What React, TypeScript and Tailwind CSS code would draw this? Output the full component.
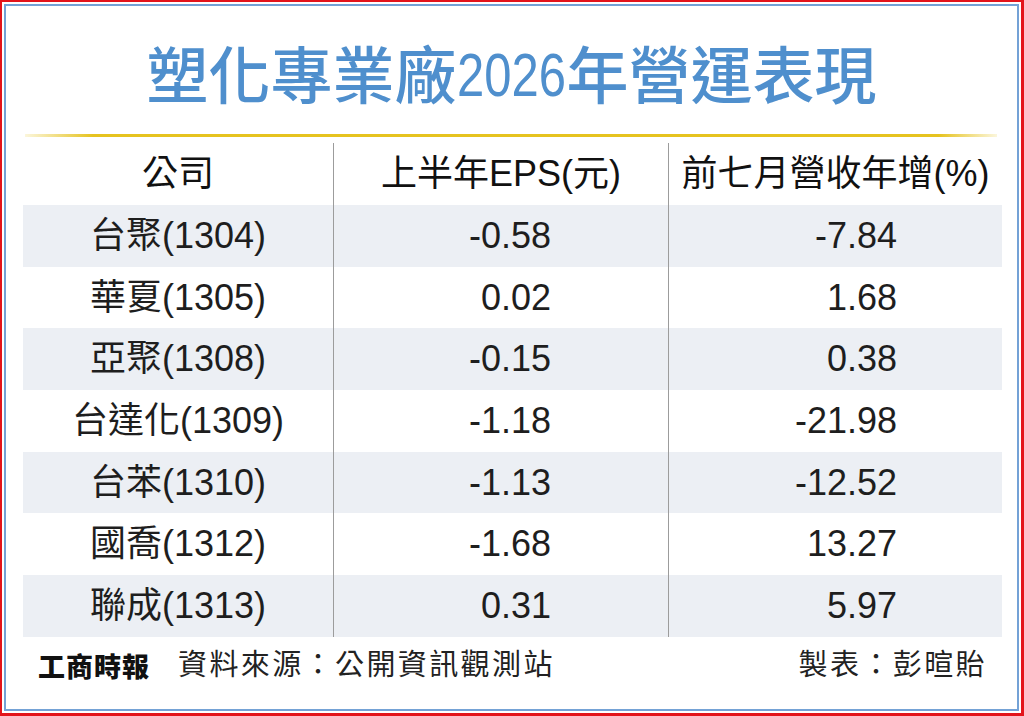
const rows = [
  { name: '台聚(1304)', eps: '-0.58', growth: '-7.84' },
  { name: '華夏(1305)', eps: '0.02', growth: '1.68' },
  { name: '亞聚(1308)', eps: '-0.15', growth: '0.38' },
  { name: '台達化(1309)', eps: '-1.18', growth: '-21.98' },
  { name: '台苯(1310)', eps: '-1.13', growth: '-12.52' },
  { name: '國喬(1312)', eps: '-1.68', growth: '13.27' },
  { name: '聯成(1313)', eps: '0.31', growth: '5.97' },
];

export default function App() {
  return (
    <div className="w-[1024px] h-[716px] bg-white border-t-2 border-l-2 border-r-[3px] border-b-[3px] border-[#e3141b] p-[2px] font-['Liberation_Sans','Noto_Sans_CJK_TC',sans-serif] text-[#1a1a1a]">
      <div className="h-full border-2 border-[#74a2d6] flex flex-col">
        {/* Title */}
        <div className="h-[128px] pt-[3px] flex items-center justify-center">
          <h1 className="flex items-center text-[62px] leading-none font-medium text-[#4f8fcd] font-['Noto_Sans_CJK_TC',sans-serif]">
            <span>塑化專業廠</span>
            <span className="inline-block w-[110px] overflow-visible">
              <span className="inline-block origin-left scale-x-[0.79] font-['Liberation_Sans',sans-serif] font-normal">2026</span>
            </span>
            <span>年營運表現</span>
          </h1>
        </div>

        {/* Gold rule */}
        <div className="ml-[19px] w-[972px] h-[3px] bg-[linear-gradient(90deg,#fbf6dc_0%,#e6c31f_7%,#e6c31f_94%,#fbf6dc_100%)]" />

        {/* Table */}
        <div className="ml-[17px] w-[979px]">
          <div className="h-[68px] pt-[6px] grid grid-cols-[310px_335px_334px] text-[36px] leading-none text-[#111]">
            <div className="flex items-center justify-center">公司</div>
            <div className="flex items-center justify-center border-l border-[#9c9c9c]">上半年EPS(元)</div>
            <div className="flex items-center justify-center border-l border-[#9c9c9c]">前七月營收年增(%)</div>
          </div>
          {rows.map((r, i) => (
            <div
              key={r.name}
              className={`h-[61.7px] grid grid-cols-[310px_335px_334px] text-[36px] leading-none text-[#1e1e1e] ${i % 2 === 0 ? 'bg-[#eceff4]' : 'bg-white'}`}
            >
              <div className="flex items-center justify-center">{r.name}</div>
              <div className="flex items-center justify-end pr-[117px] border-l border-[#9c9c9c]">{r.eps}</div>
              <div className="flex items-center justify-end pr-[105px] border-l border-[#9c9c9c]">{r.growth}</div>
            </div>
          ))}
        </div>

        {/* Footer */}
        <div className="h-[58px] flex items-center justify-between pl-[32px] pr-[30px] text-[#222]">
          <div className="flex items-center">
            <span className="text-[27px] font-black tracking-[1px] text-[#111] font-['Noto_Sans_CJK_TC',sans-serif]">工商時報</span>
            <span className="ml-[28px] text-[29px] tracking-[2.4px]">資料來源：公開資訊觀測站</span>
          </div>
          <span className="text-[29px] tracking-[2.4px]">製表：彭暄貽</span>
        </div>
      </div>
    </div>
  );
}
